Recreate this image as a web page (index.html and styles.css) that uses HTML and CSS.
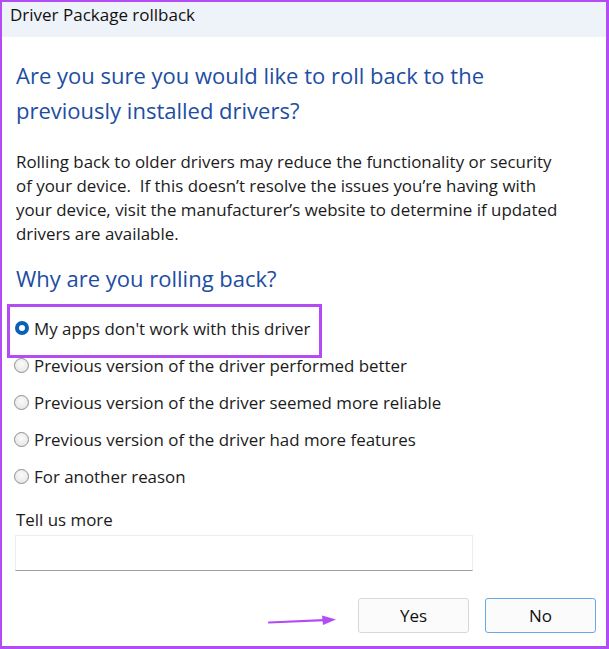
FILE: index.html
```html
<!DOCTYPE html>
<html>
<head>
<meta charset="utf-8">
<link rel="stylesheet" href="styles.css">
</head>
<body>
<div class="frame">
  <div class="titlebar">Driver Package rollback</div>
  <div class="content">
    <h1 class="heading">Are you sure you would like to roll back to the previously installed drivers?</h1>
    <p class="body-text">Rolling back to older drivers may reduce the functionality or security of your device.&nbsp; If this doesn’t resolve the issues you’re having with your device, visit the manufacturer’s website to determine if updated drivers are available.</p>
    <h2 class="heading sub">Why are you rolling back?</h2>
    <div class="options">
      <div class="option highlight"><span class="radio checked"></span>My apps don't work with this driver</div>
      <div class="option"><span class="radio"></span>Previous version of the driver performed better</div>
      <div class="option"><span class="radio"></span>Previous version of the driver seemed more reliable</div>
      <div class="option"><span class="radio"></span>Previous version of the driver had more features</div>
      <div class="option"><span class="radio"></span>For another reason</div>
    </div>
    <div class="more-label">Tell us more</div>
    <div class="textbox"></div>
    <div class="buttons">
      <svg class="arrow" width="70" height="14" viewBox="0 0 70 14"><path d="M1 9.5 L56 7.2" stroke="#b44cf5" stroke-width="2.2" fill="none" stroke-linecap="round"/><path d="M54 2.5 L68 6.6 L55 12 Z" fill="#b44cf5"/></svg>
      <div class="btn">Yes</div>
      <div class="btn default">No</div>
    </div>
  </div>
</div>
</body>
</html>
```
FILE: styles.css
```css
* { box-sizing: border-box; }
html, body { margin: 0; padding: 0; background: #fff; }
body { font-family: "Open Sans", "Noto Sans", sans-serif; color: #1b1b1b; }
.frame {
  width: 609px; height: 649px;
  border-style: solid; border-color: #b44cf5;
  border-width: 2px 3px 3px 2px;
  background: #fff;
  overflow: hidden;
}
.titlebar {
  height: 35px; background: #eef2f9;
  font-size: 17px; line-height: 26px; padding-left: 8px;
  color: #111;
}
.content { padding: 21px 0 0 14px; }
.heading {
  margin: 0; font-weight: 400; color: #1d4ea2;
  font-size: 22px; line-height: 35px; width: 520px;
}
.body-text {
  margin: 22px 0 0; font-size: 16.9px; line-height: 24px; width: 545px; color: #1b1b1b;
}
.sub { margin-top: 14.5px; }
.options { margin-top: 14px; }
.option {
  position: relative; display: flex; align-items: center;
  height: 37px; font-size: 16.9px; color: #1b1b1b;
}
.option.highlight::before {
  content: ""; position: absolute;
  left: -9px; top: -5.5px; width: 309px; height: 48px;
  border: 3px solid #b44cf5;
}
.radio {
  width: 15px; height: 15px; border-radius: 50%;
  border: 1px solid #8e8e8e;
  background: radial-gradient(circle at 50% 40%, #fbfbfb 0%, #ececec 60%, #dedede 100%);
  margin: 0 5px 0 -2px; flex: none;
}
.radio.checked {
  width: 14px; height: 14px; margin-left: -1px; margin-right: 5px;
  border: 4px solid #0a5fb8; background: #fff;
}
.more-label { margin-top: 14.5px; font-size: 16.9px; line-height: 22px; }
.textbox {
  margin: 4px 0 0 -1px; width: 458px; height: 36px;
  border: 1px solid #ececec; border-bottom: 1px solid #a0a0a0; background: #fff;
}
.buttons {
  display: flex; justify-content: flex-end; align-items: center;
  margin-top: 27px; padding-right: 10px; gap: 16px;
}
.arrow { margin-right: 4px; margin-top: 8px; }
.btn {
  width: 111px; height: 35px; border: 1px solid #d8d8d8; border-radius: 3px;
  background: #fbfbfb; font-size: 17px; display: flex; align-items: center; justify-content: center;
  color: #111;
}
.btn.default { border-color: #6aa7e6; }
```
